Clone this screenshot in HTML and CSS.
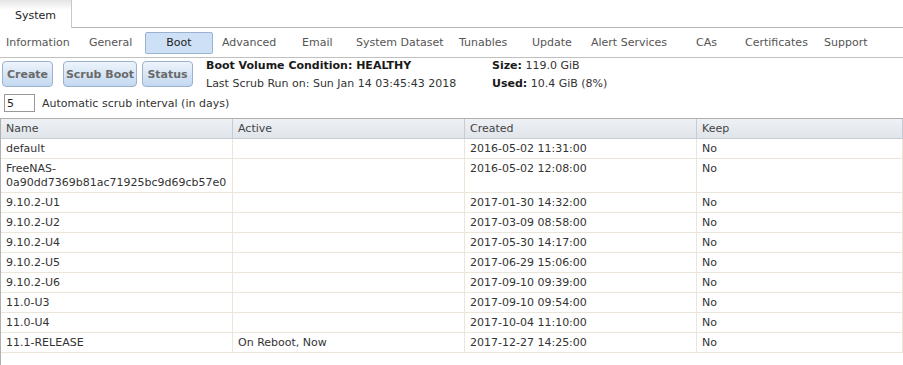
FILE: index.html
```html
<!DOCTYPE html>
<html lang="en">
<head>
    <meta charset="UTF-8">
    <title>System - Boot</title>
    <link rel="stylesheet" href="styles.css">
</head>
<body>
    <div class="tabbar">
        <div class="tab">System</div>
        <div class="tab-rest"></div>
    </div>

    <div class="subtabs">
        <span class="subtab s-info">Information</span>
        <span class="subtab s-general">General</span>
        <span class="subtab activo">Boot</span>
        <span class="subtab s-advanced">Advanced</span>
        <span class="subtab s-email">Email</span>
        <span class="subtab s-dataset">System Dataset</span>
        <span class="subtab s-tunables">Tunables</span>
        <span class="subtab s-update">Update</span>
        <span class="subtab s-alert">Alert Services</span>
        <span class="subtab s-cas">CAs</span>
        <span class="subtab s-certs">Certificates</span>
        <span class="subtab">Support</span>
    </div>

    <div class="panel">
        <div class="toolbar">
            <div class="botones">
                <button class="btn btn-create">Create</button>
                <button class="btn btn-scrub">Scrub Boot</button>
                <button class="btn btn-status">Status</button>
            </div>
            <div class="estado">
                <p><b>Boot Volume Condition: HEALTHY</b></p>
                <p>Last Scrub Run on: Sun Jan 14 03:45:43 2018</p>
            </div>
            <div class="tamano">
                <p><b>Size:</b> 119.0 GiB</p>
                <p><b>Used:</b> 10.4 GiB (8%)</p>
            </div>
        </div>

        <div class="intervalo">
            <input class="campo" type="text" value="5">
            <span>Automatic scrub interval (in days)</span>
        </div>
    </div>

    <div class="grid">
        <div class="fila cabecera">
            <div class="celda">Name</div>
            <div class="celda">Active</div>
            <div class="celda">Created</div>
            <div class="celda">Keep</div>
        </div>
        <div class="fila">
            <div class="celda">default</div>
            <div class="celda"></div>
            <div class="celda">2016-05-02 11:31:00</div>
            <div class="celda">No</div>
        </div>
        <div class="fila">
            <div class="celda">FreeNAS-<br>0a90dd7369b81ac71925bc9d69cb57e0</div>
            <div class="celda"></div>
            <div class="celda">2016-05-02 12:08:00</div>
            <div class="celda">No</div>
        </div>
        <div class="fila">
            <div class="celda">9.10.2-U1</div>
            <div class="celda"></div>
            <div class="celda">2017-01-30 14:32:00</div>
            <div class="celda">No</div>
        </div>
        <div class="fila">
            <div class="celda">9.10.2-U2</div>
            <div class="celda"></div>
            <div class="celda">2017-03-09 08:58:00</div>
            <div class="celda">No</div>
        </div>
        <div class="fila">
            <div class="celda">9.10.2-U4</div>
            <div class="celda"></div>
            <div class="celda">2017-05-30 14:17:00</div>
            <div class="celda">No</div>
        </div>
        <div class="fila">
            <div class="celda">9.10.2-U5</div>
            <div class="celda"></div>
            <div class="celda">2017-06-29 15:06:00</div>
            <div class="celda">No</div>
        </div>
        <div class="fila">
            <div class="celda">9.10.2-U6</div>
            <div class="celda"></div>
            <div class="celda">2017-09-10 09:39:00</div>
            <div class="celda">No</div>
        </div>
        <div class="fila">
            <div class="celda">11.0-U3</div>
            <div class="celda"></div>
            <div class="celda">2017-09-10 09:54:00</div>
            <div class="celda">No</div>
        </div>
        <div class="fila">
            <div class="celda">11.0-U4</div>
            <div class="celda"></div>
            <div class="celda">2017-10-04 11:10:00</div>
            <div class="celda">No</div>
        </div>
        <div class="fila">
            <div class="celda">11.1-RELEASE</div>
            <div class="celda">On Reboot, Now</div>
            <div class="celda">2017-12-27 14:25:00</div>
            <div class="celda">No</div>
        </div>
    </div>
</body>
</html>
```

FILE: styles.css
```css
body {
    margin: 0;
    font-family: 'DejaVu Sans', Verdana, sans-serif;
    font-size: 11px;
    color: #333;
    background-color: white;
}

p {
    margin: 0;
}

.tabbar {
    display: flex;
    height: 28px;
}

.tab {
    width: 72px;
    box-sizing: border-box;
    border-right: 1px solid #c8c8c8;
    background: linear-gradient(#e4e4e4, #ffffff 10px);
    padding-top: 9px;
    text-align: center;
    color: #222;
}

.tab-rest {
    flex: 1;
    border-bottom: 1px solid #b4b4b4;
}

.subtabs {
    display: flex;
    align-items: center;
    height: 29px;
    border-bottom: 1px solid #c0c0c0;
    padding-left: 6px;
    color: #555;
    white-space: nowrap;
}

.subtab {
    flex: none;
}

.s-info { width: 83px; }
.s-general { width: 56px; }
.s-advanced { width: 80px; }
.s-email { width: 54px; }
.s-dataset { width: 103px; }
.s-tunables { width: 73px; }
.s-update { width: 59px; }
.s-alert { width: 105px; }
.s-cas { width: 49px; }
.s-certs { width: 79px; }

.subtab.activo {
    width: 66px;
    height: 20px;
    line-height: 20px;
    text-align: center;
    background-color: #cde0f5;
    border: 1px solid #9bb3d1;
    border-radius: 2px;
    color: #222;
    margin-right: 9px;
}

.panel {
    padding: 2px 0 0 2px;
}

.toolbar {
    display: flex;
    align-items: flex-start;
    height: 32px;
}

.botones {
    display: flex;
    gap: 5px;
    margin-top: 1px;
}

.btn {
    font-family: inherit;
    font-size: 11px;
    font-weight: bold;
    color: #6a6a6a;
    height: 26px;
    padding: 0;
    background: linear-gradient(#edf4fc, #c3d8f0);
    border: 1px solid #9cb2cf;
    border-radius: 4px;
}

.btn-create { width: 51px; }
.btn-scrub { width: 74px; margin-left: 5px; }
.btn-status { width: 51px; }

.estado {
    margin-top: -3px;
    margin-left: 13px;
    width: 286px;
    line-height: 18px;
}

.tamano {
    margin-top: -3px;
    line-height: 18px;
}

.estado b,
.tamano b {
    color: #1a1a1a;
}

.intervalo {
    display: flex;
    align-items: center;
    gap: 7px;
    margin-top: 2px;
    padding-left: 2px;
}

.campo {
    width: 31px;
    height: 18px;
    box-sizing: border-box;
    border: 1px solid #999;
    padding: 1px 2px 0;
    font-family: inherit;
    font-size: 11px;
    color: #222;
}

.grid {
    margin-top: 6px;
    min-height: 260px;
    border-left: 1px solid #b0b0b0;
    border-top: 1px solid #b0b0b0;
}

.fila {
    display: grid;
    grid-template-columns: 232px 232px 232px 1fr;
    border-bottom: 1px solid #ece5d9;
}

.celda {
    padding: 3px 5px 2px;
    line-height: 14px;
    border-right: 1px solid #ece5d9;
}

.cabecera {
    background: linear-gradient(#eef1f5, #e0e5eb);
    border-bottom: 1px solid #c8ccd2;
}

.cabecera .celda {
    padding: 3px 5px 2px;
    border-right: 1px solid #c8ccd2;
    color: #444;
}
```
